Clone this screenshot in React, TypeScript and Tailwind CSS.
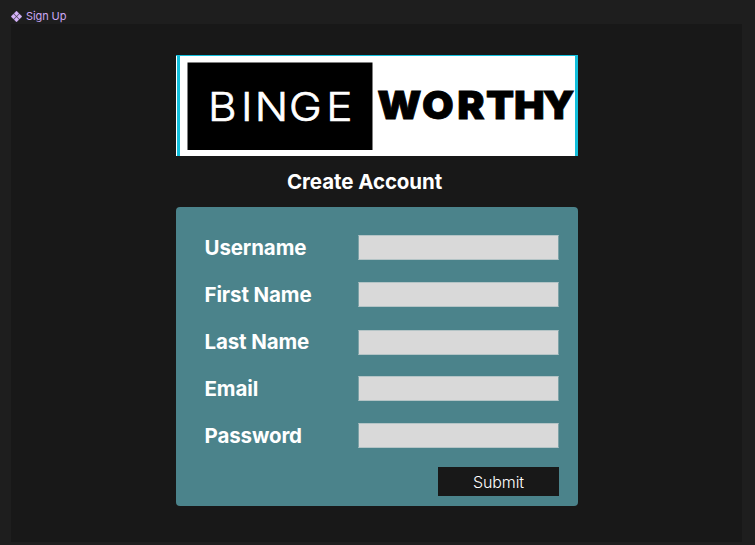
const fields = [
  { label: "Username", gap: "mb-[22px]", text: "" },
  { label: "First Name", gap: "mb-[23px]", text: "" },
  { label: "Last Name", gap: "mb-[21px]", text: "-mt-px" },
  { label: "Email", gap: "mb-[22px]", text: "" },
  { label: "Password", gap: "mb-[19px]", text: "" },
];

function Logo() {
  return (
    <svg width="402" height="101" viewBox="0 0 402 101" className="block" role="img" aria-label="Binge Worthy">
      <rect width="402" height="101" fill="#fff" />
      <rect width="402" height="1" fill="#12bfdc" />
      <rect x="1" width="3" height="101" fill="#12bfdc" />
      <rect x="399" width="3" height="101" fill="#12bfdc" />
      <rect x="11.5" y="7.5" width="185" height="87.5" fill="#000" />
      <text transform="translate(0 66) scale(1.1 1)" x="29.2 59 71.6 102.8 136.7" fill="#fff" stroke="#fff" strokeWidth="0.7" fontFamily="Inter, sans-serif" fontWeight="300" fontSize="40">BINGE</text>
      <text transform="translate(0 64) scale(1.05 1)" x="191.6 234.3 267.8 295.2 321.8 349.2" fill="#000" stroke="#000" strokeWidth="0.8" fontFamily="Inter, sans-serif" fontWeight="900" fontSize="39">WORTHY</text>
    </svg>
  );
}

export default function App() {
  return (
    <div className="h-[545px] w-[755px] overflow-hidden bg-[#1e1e1e] pl-[11px] font-['Inter',sans-serif]">
      <div className="flex h-6 items-center pt-[8px] text-[11px] leading-4 text-[#cda8f5]">
        <svg width="11" height="11" viewBox="0 0 11 11" fill="#d5b3fa" className="mr-[4px]">
          <path d="M5.5 0 8 2.5 5.5 5 3 2.5ZM2.5 3 5 5.5 2.5 8 0 5.5ZM8.5 3 11 5.5 8.5 8 6 5.5ZM5.5 6 8 8.5 5.5 11 3 8.5Z" stroke="#d5b3fa" strokeWidth="0.3" />
        </svg>
        <span className="tracking-[-0.1px]">Sign Up</span>
      </div>
      <main className="h-[518px] w-[731px] bg-[#181818] pl-[165px] pt-[31px]">
        <Logo />
        <h1 className="mt-[12px] h-[28px] pl-[111px] text-[20.5px] font-bold leading-[28px] tracking-[-0.08px] text-white">Create Account</h1>
        <form className="mt-[11px] h-[299px] w-[402px] rounded-[4px] bg-[#4b838b] pl-[28px] pt-[28px]">
          {fields.map(({ label, gap, text }) => (
            <label key={label} className={`flex h-[25px] ${gap}`}>
              <span className={`w-[154px] pl-[0.5px] text-[20.5px] font-bold leading-[25px] tracking-[-0.12px] text-white ${text}`}>{label}</span>
              <input className="h-[25px] w-[201px] border border-x-[#7da2a7] border-y-[#b4c4c6] bg-[#d9d9d9]" />
            </label>
          ))}
          <button type="button" className="ml-[234px] block h-[29px] w-[121px] bg-[#181818] text-base font-light leading-[30px] tracking-[-0.1px] text-white">Submit</button>
        </form>
      </main>
    </div>
  );
}
